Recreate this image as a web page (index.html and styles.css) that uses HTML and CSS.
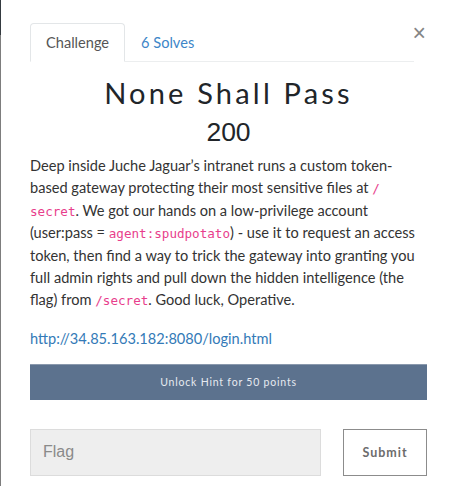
FILE: index.html
```html
<!DOCTYPE html>
<html>
<head>
<meta charset="utf-8">
<link rel="stylesheet" href="styles.css">
</head>
<body>
<div class="edge"></div>
<div class="modal">
  <button class="close" aria-label="Close">&times;</button>
  <nav class="tabs">
    <a class="tab active">Challenge</a>
    <a class="tab">6 Solves</a>
  </nav>
  <h2 class="title">None Shall Pass</h2>
  <h4 class="value">200</h4>
  <p class="desc">Deep inside Juche Jaguar’s intranet runs a custom token-based gateway protecting their most sensitive files at <code>/<wbr>secret</code>. We got our hands on a low-privilege account (user:pass = <code>agent:spudpotato</code>) - use it to request an access token, then find a way to trick the gateway into granting you full admin rights and pull down the hidden intelligence (the flag) from <code>/secret</code>. Good luck, Operative.</p>
  <p class="link"><a>http://34.85.163.182:8080/login.html</a></p>
  <div class="hint">Unlock Hint for 50 points</div>
  <div class="submit-row">
    <input class="flag" type="text" placeholder="Flag">
    <button class="submit">Submit</button>
  </div>
</div>
</body>
</html>
```

FILE: styles.css
```css
html, body {
  margin: 0;
  padding: 0;
  background: #fff;
  height: 100%;
  overflow: hidden;
}
body {
  display: flex;
  font-family: "Lato", "Liberation Sans", sans-serif;
  color: #212529;
}
.edge {
  width: 1px;
  flex: none;
  background: linear-gradient(#343a40 0, #343a40 35px, #7d7d7d 35px);
}
.modal {
  position: relative;
  flex: 1;
  padding: 23px 23px 0 29px;
}
.close {
  position: absolute;
  top: 22px;
  right: 24px;
  border: 0;
  background: none;
  padding: 0;
  font-family: "Liberation Sans", sans-serif;
  font-size: 23px;
  line-height: 23px;
  font-weight: normal;
  color: #858585;
}
.tabs {
  display: flex;
  margin-right: 13px;
  border-bottom: 1px solid #eceeef;
}
.tab {
  display: block;
  padding: 8px 15px 7px 15px;
  font-size: 14.6px;
  line-height: 22px;
  color: #3d86c8;
  border: 1px solid transparent;
  border-radius: 4px 4px 0 0;
  margin-bottom: -1px;
}
.tab.active {
  color: #555;
  border-color: #e3e6e8 #e3e6e8 #fff;
  background: #fff;
}
.title {
  margin: 13px 0 0;
  text-align: center;
  font-family: "Lato", sans-serif;
  font-weight: 400;
  font-size: 29px;
  line-height: 36px;
  letter-spacing: 3.2px;
  color: #212529;
}
.value {
  margin: 5px 0 0;
  text-align: center;
  font-family: "Liberation Sans", sans-serif;
  font-weight: 400;
  font-size: 26.5px;
  line-height: 32px;
  color: #212529;
}
.desc {
  margin: 7px 0 0;
  font-size: 14.6px;
  line-height: 22.4px;
  color: #333;
}
code {
  font-family: "DejaVu Sans Mono", monospace;
  font-size: 12.6px;
  line-height: 1;
  color: #e83e8c;
}
.link {
  margin: 16px 0 0;
  font-size: 14.6px;
  line-height: 22px;
}
.link a {
  color: #337ab7;
}
.hint {
  margin-top: 14px;
  height: 35px;
  border-top: 1px solid #8a99ad;
  background: #5c728e;
  color: #e6eaf0;
  font-size: 10.5px;
  font-weight: 400;
  letter-spacing: 0.8px;
  display: flex;
  align-items: center;
  justify-content: center;
}
.submit-row {
  display: flex;
  gap: 22px;
  margin-top: 29px;
}
.flag {
  flex: 1;
  height: 47px;
  box-sizing: border-box;
  border: 1px solid #dcdcdc;
  background: #eeeeee;
  padding: 0 12px;
  font-family: "Liberation Sans", sans-serif;
  font-size: 16px;
  color: #333;
  outline: none;
}
.flag::placeholder {
  color: #8a8a8a;
}
.submit {
  width: 84px;
  height: 47px;
  box-sizing: border-box;
  border: 1px solid #8c8c8c;
  background: #fff;
  font-family: "Lato", sans-serif;
  font-weight: 700;
  font-size: 12.5px;
  letter-spacing: 1px;
  color: #6c6c6c;
}
```
